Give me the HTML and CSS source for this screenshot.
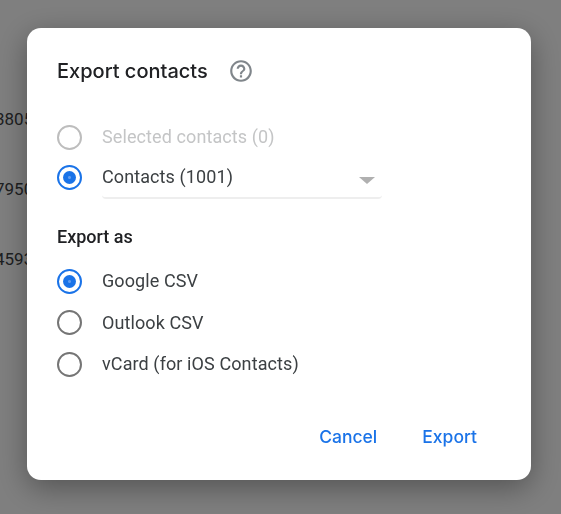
FILE: index.html
```html
<!DOCTYPE html>
<html lang="en">
<head>
  <meta charset="UTF-8" />
  <meta name="viewport" content="width=device-width, initial-scale=1" />
  <title>Export contacts</title>
  <link rel="stylesheet" href="styles.css">
</head>
<body>
  <div class="numbers">
    <div>3805</div>
    <div>7950</div>
    <div>4593</div>
  </div>

  <div class="scrim"></div>

  <div class="dialog">
    <div class="title-row">
      <h2>Export contacts</h2>
      <svg class="help" width="26" height="26" viewBox="0 0 24 24" fill="#80868b">
        <path d="M11 18h2v-2h-2v2zm1-16C6.48 2 2 6.48 2 12s4.48 10 10 10 10-4.48 10-10S17.52 2 12 2zm0 18c-4.41 0-8-3.59-8-8s3.59-8 8-8 8 3.59 8 8-3.59 8-8 8zm0-14c-2.21 0-4 1.79-4 4h2c0-1.1.9-2 2-2s2 .9 2 2c0 2-3 1.75-3 5h2c0-2.25 3-2.5 3-5 0-2.21-1.79-4-4-4z"/>
      </svg>
    </div>

    <div class="options first">
      <div class="option disabled">
        <span class="radio"></span>
        <span>Selected contacts (0)</span>
      </div>
      <div class="option with-select">
        <span class="radio checked"></span>
        <div class="select">
          <span>Contacts (1001)</span>
          <span class="arrow"></span>
        </div>
      </div>
    </div>

    <h3>Export as</h3>

    <div class="options">
      <div class="option">
        <span class="radio checked"></span>
        <span>Google CSV</span>
      </div>
      <div class="option">
        <span class="radio"></span>
        <span>Outlook CSV</span>
      </div>
      <div class="option">
        <span class="radio"></span>
        <span>vCard (for iOS Contacts)</span>
      </div>
    </div>

    <div class="actions">
      <button>Cancel</button>
      <button>Export</button>
    </div>
  </div>
</body>
</html>
```

FILE: styles.css
```css
html, body {
  height: 100%;
}
body {
  margin: 0;
  overflow: hidden;
  background: white;
  font-family: Roboto, sans-serif;
  color: #3c4043;
}
.numbers {
  display: flex;
  flex-direction: column;
  gap: 50px;
  padding-top: 109px;
  margin-left: -5px;
  font-size: 17px;
  line-height: 20px;
  color: #3c4043;
}
.scrim {
  position: fixed;
  left: 0;
  top: 0;
  width: 100%;
  height: 100%;
  background: rgba(0, 0, 0, 0.5);
}
.dialog {
  position: fixed;
  left: 27px;
  top: 28px;
  width: 504px;
  height: 452px;
  box-sizing: border-box;
  padding: 28px 30px 0;
  background: white;
  border-radius: 14px;
  box-shadow: 0 8px 30px rgba(0, 0, 0, 0.35);
}
.title-row {
  display: flex;
  align-items: center;
  gap: 20px;
  height: 30px;
}
h2 {
  margin: 0;
  font-family: Inter, sans-serif;
  font-size: 20px;
  font-weight: 500;
  color: #202124;
}
.options {
  display: flex;
  flex-direction: column;
  gap: 17.5px;
}
.options.first {
  gap: 16px;
  margin-top: 39px;
}
.option {
  display: flex;
  align-items: center;
  gap: 20px;
  height: 24px;
  font-size: 18px;
  line-height: 24px;
  letter-spacing: 0.1px;
}
.option.disabled {
  color: #c4c5c6;
}
.option.with-select {
  height: 34px;
  align-items: flex-start;
}
.radio {
  width: 25px;
  height: 25px;
  flex: none;
  border: 2px solid #757575;
  border-radius: 50%;
  box-sizing: border-box;
  display: flex;
  align-items: center;
  justify-content: center;
}
.disabled .radio {
  border-color: #bdbdbd;
}
.radio.checked {
  border-color: #1a73e8;
}
.radio.checked::after {
  content: "";
  width: 13px;
  height: 13px;
  border-radius: 50%;
  background: radial-gradient(circle, #5f9cf0 0 1px, #1a73e8 2px);
}
.select {
  width: 280px;
  height: 34px;
  box-sizing: border-box;
  display: flex;
  align-items: flex-start;
  justify-content: space-between;
  border-bottom: 2px solid #eeeeee;
  border-radius: 0 0 4px 4px;
}
.arrow {
  width: 0;
  height: 0;
  margin-right: 7px;
  margin-top: 12px;
  border-left: 8px solid transparent;
  border-right: 8px solid transparent;
  border-top: 7px solid #b0b0b0;
}
h3 {
  margin: 28px 0 22px;
  font-size: 18px;
  line-height: 20px;
  font-weight: 500;
  color: #202124;
}
.actions {
  display: flex;
  justify-content: flex-end;
  gap: 45px;
  margin-top: 50px;
  padding-right: 24px;
}
button {
  padding: 0;
  border: none;
  background: none;
  font-family: Inter, sans-serif;
  font-size: 17.5px;
  font-weight: 500;
  line-height: 22px;
  color: #1a73e8;
}
```
